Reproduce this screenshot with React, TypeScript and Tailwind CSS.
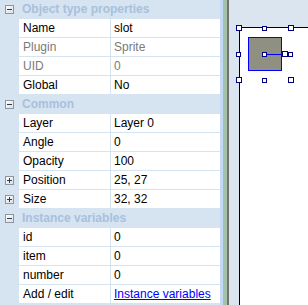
import React from 'react';

type Row =
  | { kind: 'header'; label: string }
  | { kind: 'prop'; label: string; value: string; muted?: boolean; expand?: boolean; link?: boolean };

const ROWS: Row[] = [
  { kind: 'header', label: 'Object type properties' },
  { kind: 'prop', label: 'Name', value: 'slot' },
  { kind: 'prop', label: 'Plugin', value: 'Sprite', muted: true },
  { kind: 'prop', label: 'UID', value: '0', muted: true },
  { kind: 'prop', label: 'Global', value: 'No' },
  { kind: 'header', label: 'Common' },
  { kind: 'prop', label: 'Layer', value: 'Layer 0' },
  { kind: 'prop', label: 'Angle', value: '0' },
  { kind: 'prop', label: 'Opacity', value: '100' },
  { kind: 'prop', label: 'Position', value: '25, 27', expand: true },
  { kind: 'prop', label: 'Size', value: '32, 32', expand: true },
  { kind: 'header', label: 'Instance variables' },
  { kind: 'prop', label: 'id', value: '0' },
  { kind: 'prop', label: 'item', value: '0' },
  { kind: 'prop', label: 'number', value: '0' },
  { kind: 'prop', label: 'Add / edit', value: 'Instance variables', link: true },
];

const ToggleBox = ({ plus }: { plus?: boolean }) => (
  <svg width="9" height="9" viewBox="0 0 9 9" className="shrink-0">
    <defs>
      <linearGradient id={plus ? 'gp' : 'gm'} x1="0" y1="0" x2="1" y2="1">
        <stop offset="0" stopColor="#ffffff" />
        <stop offset="1" stopColor="#d8dde3" />
      </linearGradient>
    </defs>
    <rect x="0.5" y="0.5" width="8" height="8" fill={`url(#${plus ? 'gp' : 'gm'})`} stroke="#8b96a3" />
    <rect x="2" y="4" width="5" height="1" fill="#3c3c3c" />
    {plus && <rect x="4" y="2" width="1" height="5" fill="#3c3c3c" />}
  </svg>
);

const Handle = ({ x, y, s }: { x: number; y: number; s: number }) => (
  <rect x={x + 0.5} y={y + 0.5} width={s} height={s} fill="#ffffff" stroke="#000080" strokeWidth="1" />
);

export default function App() {
  return (
    <div
      className="flex w-[308px] h-[305px] overflow-hidden bg-[#d6e3f0] text-[12px] leading-none"
      style={{ fontFamily: '"Liberation Sans", Arial, sans-serif' }}
    >
      <div className="flex flex-col w-[220px] shrink-0 bg-[#d6e3f0]">
        {ROWS.map((row, i) =>
          row.kind === 'header' ? (
            <div key={i} className="flex items-center h-[19px] pl-[5px] gap-[8px] pb-px">
              <ToggleBox />
              <span className="font-bold text-[#a7c1dc]">{row.label}</span>
            </div>
          ) : (
            <div key={i} className="flex h-[19px] pb-px">
              <div className="flex items-center w-[19px] pl-[5px]">{row.expand && <ToggleBox plus />}</div>
              <div className={`flex items-center w-[91px] pl-[4px] bg-white ${row.muted ? 'text-[#7a7a7a]' : 'text-black'}`}>
                {row.label}
              </div>
              <div
                className={`flex items-center flex-1 ml-[1px] pl-[3px] bg-white ${
                  row.link ? 'text-[#0000ff] underline' : row.muted ? 'text-[#7a7a7a]' : 'text-black'
                }`}
              >
                {row.value}
              </div>
            </div>
          )
        )}
      </div>
      <div className="w-[3px] bg-[#c3d9f5]" />
      <div className="w-[4px] bg-[#a4c2aa]" />
      <div className="w-[2px] bg-[#727272]" />
      <div className="relative flex flex-col flex-1 bg-[#dbe5f0]">
        <div className="flex-1 ml-[10px] mt-[27px] border-l border-t border-black bg-white" />
        <svg className="absolute left-0 top-0" width="79" height="305" viewBox="0 0 79 305">
          <rect x="19.5" y="37.5" width="33" height="33" fill="#8f9081" stroke="#0000ff" />
          <line x1="37" y1="54.5" x2="53" y2="54.5" stroke="#0000ff" />
          <Handle x={7} y={25} s={5} />
          <Handle x={33} y={26} s={4} />
          <Handle x={59} y={25} s={5} />
          <Handle x={7} y={52} s={4} />
          <Handle x={59} y={52} s={4} />
          <Handle x={7} y={77} s={5} />
          <Handle x={33} y={78} s={4} />
          <Handle x={59} y={77} s={5} />
          <Handle x={33} y={52} s={4} />
          <Handle x={53} y={51} s={5} />
        </svg>
      </div>
    </div>
  );
}
